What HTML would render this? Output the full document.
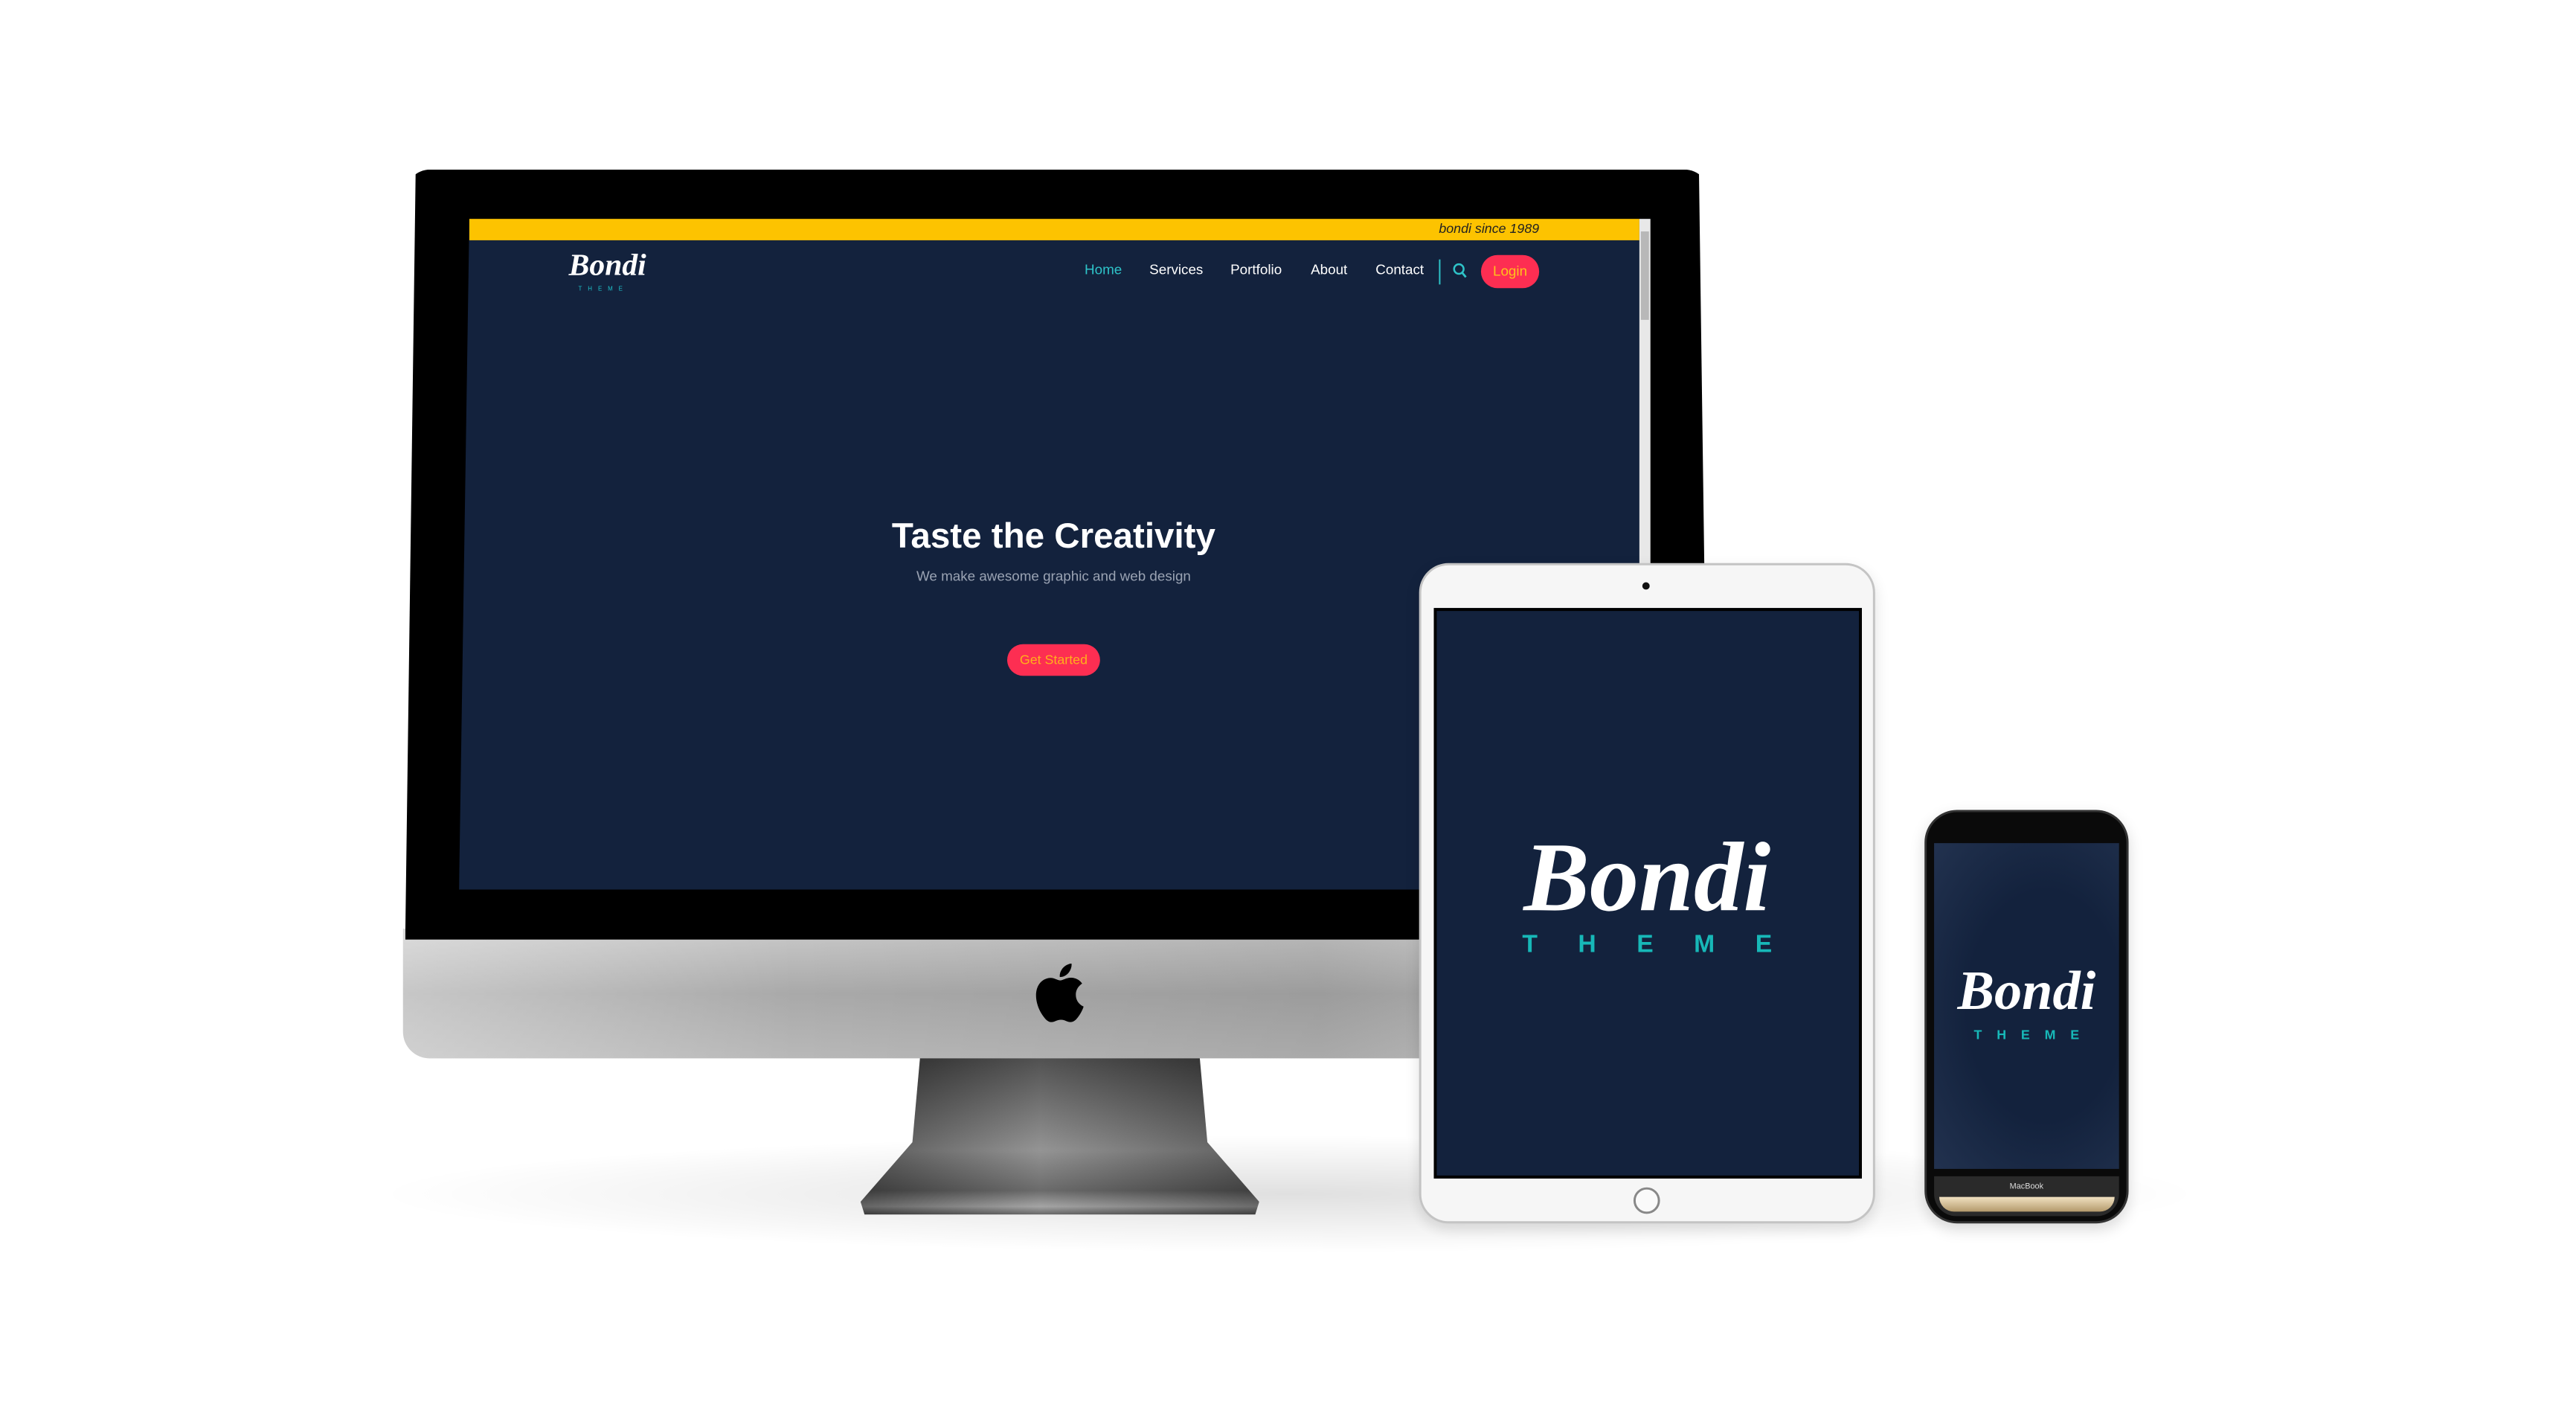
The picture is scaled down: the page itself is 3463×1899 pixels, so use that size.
<!DOCTYPE html>
<html><head><meta charset="utf-8"><style>
*{margin:0;padding:0;box-sizing:border-box}
body{width:3463px;height:1899px;background:#fff;position:relative;overflow:hidden;font-family:"Liberation Sans",sans-serif}
#w{position:absolute;left:0;top:0;width:3463px;height:1899px;transform:scale(0.9905);transform-origin:0 0}
.a{position:absolute}
.script{font-family:"Liberation Serif",serif;font-style:italic;font-weight:bold;color:#fff;white-space:nowrap}
.nav{position:absolute;top:356px;font-size:19px;color:#fff;white-space:nowrap}
</style></head><body><div id="w">
<div class="a" style="left:500px;top:1540px;width:2500px;height:160px;border-radius:50%;background:radial-gradient(ellipse at center,rgba(0,0,0,.12),rgba(0,0,0,0) 70%)"></div>
<div class="a" style="left:1168px;top:1430px;width:541px;height:218px;clip-path:polygon(15% 0,85% 0,87% 55%,100% 92%,99% 100%,1% 100%,0 92%,13% 55%);background:linear-gradient(180deg,#3a3a3a 0%,#6e6e6e 40%,#888 60%,#5a5a5a 85%,#9a9a9a 95%,#555 100%)"></div>
<div class="a" style="left:1168px;top:1430px;width:541px;height:218px;clip-path:polygon(15% 0,85% 0,87% 55%,100% 92%,99% 100%,1% 100%,0 92%,13% 55%);background:linear-gradient(90deg,rgba(0,0,0,.35),rgba(255,255,255,.1) 45%,rgba(0,0,0,.3))"></div>
<div class="a" style="left:547px;top:1260px;width:1776px;height:176px;border-radius:0 0 36px 36px;background:linear-gradient(180deg,#c9c9c9,#a9a9a9 50%,#b8b8b8)"></div>
<div class="a" style="left:547px;top:1260px;width:1776px;height:176px;border-radius:0 0 36px 36px;background:linear-gradient(90deg,rgba(255,255,255,.35),rgba(255,255,255,0) 30%,rgba(0,0,0,.08) 70%,rgba(255,255,255,.2))"></div>
<svg class="a" style="left:1398px;top:1303px" width="86" height="92" viewBox="3 2 18 21"><path fill="#000" d="M16.37 12.66c-.02-2.3 1.88-3.4 1.96-3.46-1.07-1.56-2.73-1.78-3.32-1.8-1.41-.14-2.76.83-3.47.83-.72 0-1.82-.81-2.99-.79-1.54.02-2.96.9-3.75 2.27-1.6 2.78-.41 6.89 1.15 9.14.76 1.1 1.67 2.34 2.86 2.29 1.15-.05 1.58-.74 2.97-.74 1.38 0 1.77.74 2.98.72 1.23-.02 2.01-1.12 2.77-2.22.87-1.28 1.23-2.51 1.25-2.58-.03-.01-2.4-.92-2.41-3.66zM14.1 5.9c.63-.77 1.06-1.83.94-2.9-.91.04-2.02.61-2.67 1.37-.59.68-1.1 1.76-.96 2.8 1.02.08 2.05-.51 2.69-1.27z"/></svg>
<div class="a" style="left:550px;top:230px;width:1770px;height:1045px;background:#000;border-radius:34px 34px 0 0;clip-path:polygon(0.8% 0,99.2% 0,100% 100%,0 100%)"></div>
<div class="a" style="left:623px;top:297px;width:1617px;height:910px;background:#13223d;clip-path:polygon(14px 0,100% 0,100% 100%,0 100%)"></div>
<div class="a" style="left:637px;top:297px;width:1588px;height:29px;background:#fdc300"></div>
<div class="a" style="left:2225px;top:297px;width:15px;height:910px;background:#e8e8e8"></div>
<div class="a" style="left:2227px;top:314px;width:11px;height:120px;background:#b8b8b8"></div>
<div class="a" style="left:1900px;top:300px;width:189px;font-size:18px;font-style:italic;color:#222;text-align:right">bondi since 1989</div>
<div class="a script" style="left:772px;top:336px;font-size:42px">Bondi</div>
<div class="a" style="left:785px;top:387px;font-size:8px;color:#1ec2c9;letter-spacing:8px">THEME</div>
<div class="nav" style="left:1472px;color:#2ec4c9">Home</div>
<div class="nav" style="left:1560px">Services</div>
<div class="nav" style="left:1670px">Portfolio</div>
<div class="nav" style="left:1779px">About</div>
<div class="nav" style="left:1867px">Contact</div>
<div class="a" style="left:1953px;top:352px;width:2px;height:34px;background:#2ec4c9"></div>
<svg class="a" style="left:1971px;top:356px" width="22" height="24" viewBox="0 0 22 24"><circle cx="9" cy="9" r="6.5" fill="none" stroke="#2ec4c9" stroke-width="2.5"/><path d="M13.5 14l5 6" stroke="#2ec4c9" stroke-width="2.8"/></svg>
<div class="a" style="left:2010px;top:346px;width:79px;height:45px;border-radius:23px;background:#fd2e52;color:#ffc21a;font-size:19px;text-align:center;line-height:45px">Login</div>
<div class="a" style="left:1130px;top:700px;width:600px;text-align:center;font-size:48px;font-weight:bold;color:#fff">Taste the Creativity</div>
<div class="a" style="left:1130px;top:772px;width:600px;text-align:center;font-size:19px;color:#9aa3b3">We make awesome graphic and web design</div>
<div class="a" style="left:1367px;top:874px;width:126px;height:43px;border-radius:22px;background:#fd2e52;color:#ffb01a;font-size:18px;text-align:center;line-height:43px">Get Started</div>
<div class="a" style="left:1926px;top:764px;width:619px;height:896px;border-radius:40px;background:#f6f6f6;border:3px solid #c4c4c4;box-shadow:0 8px 20px rgba(0,0,0,.12)"></div>
<div class="a" style="left:2229px;top:790px;width:10px;height:10px;border-radius:50%;background:#111"></div>
<div class="a" style="left:1946px;top:825px;width:581px;height:774px;background:#13223d;border:4px solid #000"></div>
<div class="a" style="left:2217px;top:1611px;width:36px;height:36px;border-radius:50%;border:3px solid #888;background:#fafafa"></div>
<div class="a script" style="left:1926px;top:1090px;width:619px;text-align:center;font-size:134px;line-height:200px">Bondi</div>
<div class="a" style="left:1926px;top:1262px;width:619px;text-align:center;font-size:34px;color:#17b8b8;letter-spacing:55px;padding-left:55px;font-weight:bold">THEME</div>
<div class="a" style="left:2612px;top:1099px;width:277px;height:561px;border-radius:44px;background:#0a0a0a;border:3px solid #333;box-shadow:0 8px 20px rgba(0,0,0,.15)"></div>
<div class="a" style="left:2625px;top:1144px;width:251px;height:442px;background:radial-gradient(ellipse at 60% 50%,#13223d 50%,#22324f 100%)"></div>
<div class="a" style="left:2625px;top:1596px;width:251px;height:54px;background:#2a2a2a;border-radius:0 0 30px 30px"></div>
<div class="a" style="left:2625px;top:1604px;width:251px;text-align:center;font-size:11px;color:#ddd">MacBook</div>
<div class="a" style="left:2632px;top:1624px;width:238px;height:20px;background:linear-gradient(180deg,#f1e1c1,#b49a6c);border-radius:0 0 24px 24px"></div>
<div class="a script" style="left:2612px;top:1290px;width:277px;text-align:center;font-size:75px;line-height:110px">Bondi</div>
<div class="a" style="left:2612px;top:1394px;width:277px;text-align:center;font-size:18px;color:#17b8b8;letter-spacing:20px;padding-left:20px;font-weight:bold">THEME</div>
</div></body></html>
